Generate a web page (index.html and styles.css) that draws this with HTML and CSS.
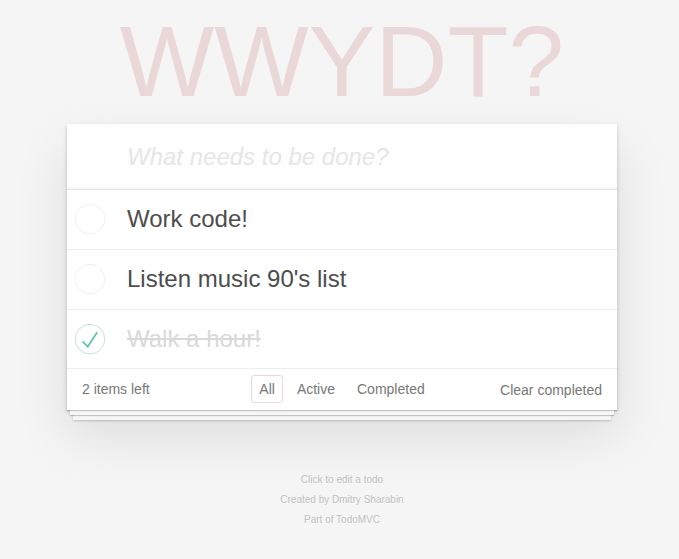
FILE: index.html
```html
<!DOCTYPE html>
<html lang="en">
<head>
<meta charset="utf-8">
<title>Todo</title>
<link rel="stylesheet" href="styles.css">
</head>
<body>
<div class="page">
<section class="todoapp">
  <h1 class="title">WWYDT?</h1>
  <div class="card">
    <header class="header">
      <input class="new-todo" placeholder="What needs to be done?">
    </header>
    <ul class="todo-list">
      <li class="item">
        <svg class="toggle" width="40" height="40" viewBox="-10 -18 100 135"><circle cx="50" cy="50" r="50" fill="none" stroke="#ededed" stroke-width="3"/></svg>
        <label class="label">Work code!</label>
      </li>
      <li class="item">
        <svg class="toggle" width="40" height="40" viewBox="-10 -18 100 135"><circle cx="50" cy="50" r="50" fill="none" stroke="#ededed" stroke-width="3"/></svg>
        <label class="label">Listen music 90's list</label>
      </li>
      <li class="item completed">
        <svg class="toggle" width="40" height="40" viewBox="-10 -18 100 135"><circle cx="50" cy="50" r="50" fill="none" stroke="#bddad5" stroke-width="3"/><path fill="#5dc2af" d="M72 25L42 71 27 56l-4 4 20 20 34-52z"/></svg>
        <label class="label">Walk a hour!</label>
      </li>
    </ul>
    <footer class="footer">
      <span class="count">2 items left</span>
      <ul class="filters">
        <li><a class="filter selected">All</a></li>
        <li><a class="filter">Active</a></li>
        <li><a class="filter">Completed</a></li>
      </ul>
      <span class="clear"><button class="clear-btn">Clear completed</button></span>
    </footer>
  </div>
</section>
<footer class="info">
  <p>Click to edit a todo</p>
  <p>Created by Dmitry Sharabin</p>
  <p>Part of TodoMVC</p>
</footer>
</div>
</body>
</html>
```

FILE: styles.css
```css
html, body {
  margin: 0;
  padding: 0;
}
body {
  font: 14px "Liberation Sans", Arial, sans-serif;
  line-height: 1.4em;
  background: #f5f5f5;
  color: #4d4d4d;
  -webkit-font-smoothing: antialiased;
}
.page {
  width: 550px;
  padding-left: 5px;
  margin-left: calc(50% - 277.5px);
}
.todoapp {
  margin: 0 0 40px 0;
}
.title {
  margin: 0 0 13px;
  padding-top: 11px;
  font-size: 100px;
  line-height: 100px;
  font-weight: 100;
  text-align: center;
  color: rgba(175, 47, 47, 0.15);
}
.card {
  background: #fff;
  box-shadow: 0 2px 4px 0 rgba(0, 0, 0, 0.2), 0 25px 50px 0 rgba(0, 0, 0, 0.1);
}
.header {
  display: block;
}
.new-todo {
  display: block;
  width: 100%;
  box-sizing: border-box;
  margin: 0;
  height: 65px;
  padding: 16px 16px 16px 60px;
  border: none;
  outline: none;
  background: rgba(0, 0, 0, 0.003);
  box-shadow: inset 0 -2px 1px rgba(0, 0, 0, 0.03);
  font-family: inherit;
  font-size: 24px;
  line-height: 1.4em;
  color: #4d4d4d;
}
.new-todo::placeholder {
  font-style: italic;
  font-weight: 300;
  color: #e6e6e6;
}
.todo-list {
  margin: 0;
  padding: 0;
  list-style: none;
  border-top: 1px solid #e6e6e6;
}
.item {
  display: flex;
  align-items: center;
  border-bottom: 1px solid #ededed;
  font-size: 24px;
}
.toggle {
  flex: none;
  display: block;
}
.label {
  display: block;
  padding: 15px 15px 15px 20px;
  line-height: 1.2;
  word-break: break-all;
  color: #4d4d4d;
}
.completed .label {
  color: #d9d9d9;
  text-decoration: line-through;
}
.footer {
  position: relative;
  display: flex;
  align-items: center;
  height: 20px;
  padding: 10px 15px 11px;
  color: #777;
  line-height: 20px;
}
.footer::before {
  content: "";
  position: absolute;
  right: 0;
  bottom: 0;
  left: 0;
  height: 50px;
  box-shadow: 0 1px 1px rgba(0, 0, 0, 0.2),
    0 8px 0 -3px #f6f6f6,
    0 9px 1px -3px rgba(0, 0, 0, 0.2),
    0 16px 0 -6px #f6f6f6,
    0 17px 2px -6px rgba(0, 0, 0, 0.2);
  pointer-events: none;
}
.count {
  flex: 1;
}
.filters {
  display: flex;
  margin: 0;
  padding: 0;
  list-style: none;
}
.filter {
  display: block;
  margin: 3px;
  padding: 3px 7px;
  border: 1px solid transparent;
  border-radius: 3px;
  color: inherit;
  text-decoration: none;
}
.filter.selected {
  border-color: rgba(175, 47, 47, 0.2);
}
.clear {
  flex: 1;
  text-align: right;
}
.clear-btn {
  margin: 0;
  padding: 0;
  border: 0;
  background: none;
  font: inherit;
  font-size: 14px;
  line-height: 20px;
  color: inherit;
  position: relative;
  top: 1px;
}
.info {
  margin: 65px 0 0;
  color: #bfbfbf;
  font-size: 10px;
  text-shadow: 0 1px 0 rgba(255, 255, 255, 0.5);
  text-align: center;
}
.info p {
  line-height: 1;
  margin: 10px 0;
}
```
